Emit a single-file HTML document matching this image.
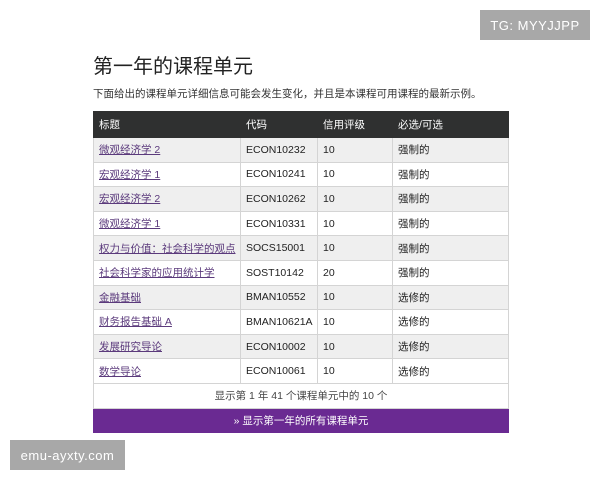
<!DOCTYPE html>
<html><head><meta charset="utf-8"><style>
body{margin:0;width:600px;height:480px;background:#fff;font-family:"Liberation Sans","Noto Sans CJK SC",sans-serif;position:relative;overflow:hidden;color:#222}
h1{position:absolute;left:93px;top:50px;margin:0;font-size:20px;font-weight:normal;color:#222}
p{position:absolute;left:93px;top:86px;margin:0;font-size:10.5px;color:#333;white-space:nowrap}
table{position:absolute;left:93px;top:111px;width:415px;border-collapse:collapse;font-size:10.5px;table-layout:fixed}
td,th{height:24.6px;padding:0 5px;text-align:left;border:1px solid #d4d4d4;box-sizing:border-box;white-space:nowrap;overflow:hidden}
th{background:#2f3030;color:#fff;font-weight:normal;border-color:#2f3030;height:26px}
tr:nth-child(even) td{background:#efefef}
a{color:#5b3a7c;text-decoration:underline}
.f td{background:#fff!important;text-align:center;color:#444}
.b td{background:#6a2a92!important;color:#fff;text-align:center;border-color:#6a2a92}
.wm{position:absolute;background:#a8a8a8;color:#fff;font-size:13px;display:flex;align-items:center;justify-content:center;letter-spacing:.5px}
</style></head><body>
<div class="wm" style="left:480px;top:10px;width:110px;height:30px">TG: MYYJJPP</div>
<h1>第一年的课程单元</h1>
<p>下面给出的课程单元详细信息可能会发生变化，并且是本课程可用课程的最新示例。</p>
<table>
<colgroup><col style="width:147px"><col style="width:77px"><col style="width:75px"><col style="width:116px"></colgroup>
<tr><th>标题</th><th>代码</th><th>信用评级</th><th>必选/可选</th></tr>
<tr><td><a>微观经济学 2</a></td><td>ECON10232</td><td>10</td><td>强制的</td></tr>
<tr><td><a>宏观经济学 1</a></td><td>ECON10241</td><td>10</td><td>强制的</td></tr>
<tr><td><a>宏观经济学 2</a></td><td>ECON10262</td><td>10</td><td>强制的</td></tr>
<tr><td><a>微观经济学 1</a></td><td>ECON10331</td><td>10</td><td>强制的</td></tr>
<tr><td><a>权力与价值：社会科学的观点</a></td><td>SOCS15001</td><td>10</td><td>强制的</td></tr>
<tr><td><a>社会科学家的应用统计学</a></td><td>SOST10142</td><td>20</td><td>强制的</td></tr>
<tr><td><a>金融基础</a></td><td>BMAN10552</td><td>10</td><td>选修的</td></tr>
<tr><td><a>财务报告基础 A</a></td><td>BMAN10621A</td><td>10</td><td>选修的</td></tr>
<tr><td><a>发展研究导论</a></td><td>ECON10002</td><td>10</td><td>选修的</td></tr>
<tr><td><a>数学导论</a></td><td>ECON10061</td><td>10</td><td>选修的</td></tr>
<tr class="f"><td colspan="4">显示第 1 年 41 个课程单元中的 10 个</td></tr>
<tr class="b"><td colspan="4">» 显示第一年的所有课程单元</td></tr>
</table>
<div class="wm" style="left:10px;top:440px;width:115px;height:30px">emu-ayxty.com</div>
</body></html>
